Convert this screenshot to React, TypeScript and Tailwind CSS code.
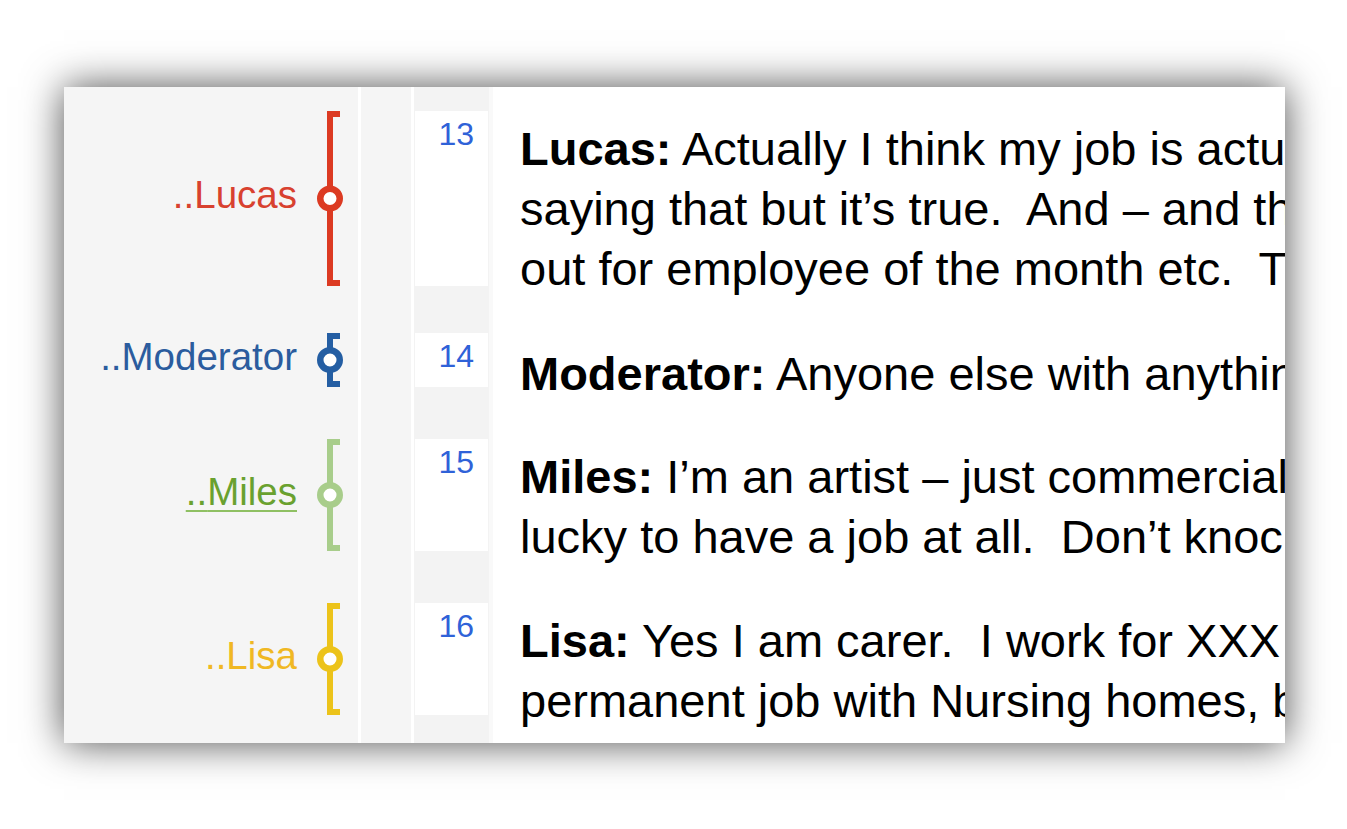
import { ReactNode } from "react";

interface Turn {
  num: number;
  speaker: string;
  labelClass: string;
  color: string;
  height: number;
  gap: number;
  pad: number;
  lines: string[];
}

const turns: Turn[] = [
  {
    num: 13,
    speaker: "Lucas",
    labelClass: "text-[#d8412f]",
    color: "#dc3a22",
    height: 175,
    gap: 47,
    pad: 8,
    lines: [
      " Actually I think my job is actually quite rewarding, I know it sounds funny",
      "saying that but it’s true.  And – and they give you awards and things",
      "out for employee of the month etc.  They make you feel valued",
    ],
  },
  {
    num: 14,
    speaker: "Moderator",
    labelClass: "text-[#2b5c9e]",
    color: "#245ea3",
    height: 54,
    gap: 52,
    pad: 11,
    lines: [" Anyone else with anything to add about that?"],
  },
  {
    num: 15,
    speaker: "Miles",
    labelClass: "text-[#6aa12f] underline decoration-[#8fc063] decoration-2 underline-offset-[5px]",
    color: "#a8cd8b",
    height: 112,
    gap: 52,
    pad: 8,
    lines: [
      " I’m an artist – just commercial stuff really, but I feel",
      "lucky to have a job at all.  Don’t knock it, that’s what I say",
    ],
  },
  {
    num: 16,
    speaker: "Lisa",
    labelClass: "text-[#f0b823]",
    color: "#ecc31a",
    height: 112,
    gap: 28,
    pad: 8,
    lines: [
      " Yes I am carer.  I work for XXX agency and they find me",
      "permanent job with Nursing homes, but sometimes it is hard",
    ],
  },
];

function Bracket({ h, color }: { h: number; color: string }) {
  return (
    <svg width={30} height={h} className="shrink-0 block">
      <rect x={12} y={0} width={6} height={h} fill={color} />
      <rect x={12} y={0} width={13} height={6} fill={color} />
      <rect x={12} y={h - 6} width={13} height={6} fill={color} />
      <circle cx={15} cy={h / 2} r={9.75} fill="#ffffff" stroke={color} strokeWidth={6.5} />
    </svg>
  );
}

function Row({
  height,
  left,
  cell,
  text,
}: {
  height: number;
  left?: ReactNode;
  cell?: ReactNode;
  text?: ReactNode;
}) {
  return (
    <div className="flex shrink-0" style={{ height }}>
      <div className="w-[294px] bg-[#f5f5f5] flex justify-end items-start pr-[13px]">{left}</div>
      <div className="w-[3px] bg-white" />
      <div className="w-[50px] bg-[#f5f5f5]" />
      <div className="w-[3px] bg-white" />
      <div className="w-[75px] bg-[#f3f3f3] px-px">{cell}</div>
      <div className="w-[4px] bg-[#f9f9f9]" />
      <div className="flex-1 bg-white pl-[27px] overflow-hidden">{text}</div>
    </div>
  );
}

export default function App() {
  return (
    <div className="w-[1347px] h-[829px] bg-white overflow-hidden pl-[64px] pt-[87px] font-['Liberation_Sans',Arial,sans-serif]">
      <div className="w-[1221px] h-[656px] flex flex-col overflow-hidden shadow-[0_0_38px_rgba(0,0,0,0.7)]">
        <Row height={24} />
        {turns.map((t) => (
          <Row
            key={t.num}
            height={t.height + t.gap}
            left={
              <div className="flex items-center gap-[18px]" style={{ height: t.height }}>
                <span className={`text-[38.5px] leading-none whitespace-nowrap pb-[6px] ${t.labelClass}`}>
                  ..{t.speaker}
                </span>
                <Bracket h={t.height} color={t.color} />
              </div>
            }
            cell={
              <div
                className="bg-white text-right pr-[14px] pt-[7px] text-[32px] leading-[32px] text-[#2f62d8]"
                style={{ height: t.height }}
              >
                {t.num}
              </div>
            }
            text={
              <div className="text-[47px] leading-[60px] text-black whitespace-pre" style={{ paddingTop: t.pad }}>
                {t.lines.map((line, i) => (
                  <div key={i}>
                    {i === 0 && <span className="font-bold">{t.speaker}:</span>}
                    {line}
                  </div>
                ))}
              </div>
            }
          />
        ))}
        <div className="flex-1 flex">
          <div className="w-[294px] bg-[#f5f5f5]" />
          <div className="w-[3px] bg-white" />
          <div className="w-[50px] bg-[#f5f5f5]" />
          <div className="w-[3px] bg-white" />
          <div className="w-[75px] bg-[#f3f3f3]" />
          <div className="w-[4px] bg-[#f9f9f9]" />
          <div className="flex-1 bg-white" />
        </div>
      </div>
    </div>
  );
}
